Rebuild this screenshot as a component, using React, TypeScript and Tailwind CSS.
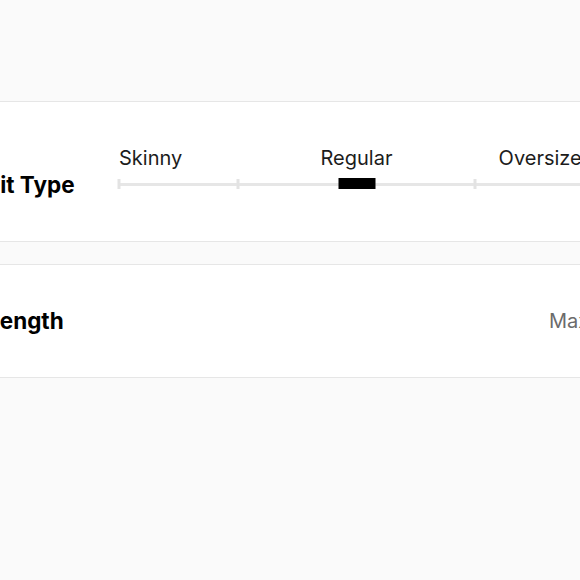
import React from "react";

export default function App() {
  const ticks = [0, 0.25, 0.5, 0.75, 1];
  return (
    <div
      className="w-[580px] h-[580px] overflow-hidden bg-[#fafafa]"
      style={{ fontFamily: "Inter, 'Noto Sans', sans-serif" }}
    >
      <div className="ml-[-40px] w-[720px] pt-[101px] flex flex-col gap-[22px]">
        {/* Fit Type card */}
        <div className="bg-white border-y border-[#e6e6e6] h-[141px] flex items-start pl-[27px] pt-[44px]">
          <div className="w-[132px] shrink-0 mt-[25px] text-[22.5px] leading-[28px] font-bold text-black">
            Fit Type
          </div>
          <div className="w-[475px] shrink-0 flex flex-col">
            <div className="grid grid-cols-3 text-[20px] leading-[24px] text-[#1c1c1c]">
              <span className="text-left">Skinny</span>
              <span className="text-center">Regular</span>
              <span className="text-right">Oversized</span>
            </div>
            <div className="relative h-[12px] mt-[8px] flex items-center">
              <div className="w-full h-[3px] bg-[#e6e6e6]" />
              {ticks.map((t, i) => (
                <div
                  key={i}
                  className="absolute top-[1px] w-[3px] h-[10px] bg-[#e3e3e3] -translate-x-1/2"
                  style={{ left: `${t * 100}%` }}
                />
              ))}
              <div className="absolute top-0 left-1/2 -translate-x-1/2 w-[37px] h-[11px] bg-black" />
            </div>
          </div>
        </div>

        {/* Length card */}
        <div className="bg-white border-y border-[#e6e6e6] h-[114px] flex items-center pl-[27px]">
          <div className="w-[562px] shrink-0 text-[22.5px] leading-[28px] font-bold text-black">
            Length
          </div>
          <div className="text-[20px] leading-[24px] text-[#6b6b6b]">Maxi</div>
        </div>
      </div>
    </div>
  );
}
